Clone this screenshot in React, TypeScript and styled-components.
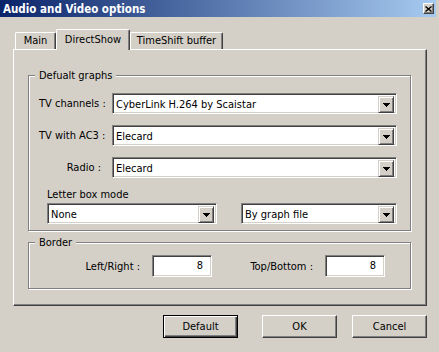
import React from "react";
import styled, { createGlobalStyle } from "styled-components";

const FONT = `"DejaVu Sans Condensed", "Liberation Sans", Tahoma, sans-serif`;

const Global = createGlobalStyle`
  html, body { margin: 0; padding: 0; background: #D4D0C8; }
  body { font-family: ${FONT}; font-size: 11px; color: #000; }
  * { box-sizing: border-box; }
`;

const Window = styled.div`
  width: 439px;
  height: 352px;
  background: #d4d0c8;
  display: flex;
  flex-direction: column;
  overflow: hidden;
`;

const TitleBar = styled.div`
  height: 17px;
  width: 436px;
  background: linear-gradient(to right, #0a246a, #a6caf0);
  display: flex;
  align-items: center;
  justify-content: space-between;
  padding: 0 2px 0 3px;
`;

const Title = styled.span`
  color: #fff;
  font-weight: bold;
  font-size: 11.5px;
  line-height: 14px;
`;

const CloseBtn = styled.div`
  width: 11px;
  height: 11px;
  background: #d4d0c8;
  border-top: 1px solid #fff;
  border-left: 1px solid #fff;
  border-right: 1px solid #404040;
  border-bottom: 1px solid #404040;
  box-shadow: inset -1px -1px #808080;
  display: flex;
  align-items: center;
  justify-content: center;
`;

const Body = styled.div`
  display: flex;
  flex-direction: column;
  padding: 0 12px 0 13px;
`;

const TabRow = styled.div`
  display: flex;
  align-items: flex-end;
  height: 20px;
  margin-top: 12px;
  padding-left: 2px;
`;

const Tab = styled.div<{ $w: number; $active?: boolean }>`
  width: ${(p) => p.$w}px;
  height: ${(p) => (p.$active ? 21 : 17)}px;
  margin-bottom: ${(p) => (p.$active ? -1 : 0)}px;
  position: relative;
  z-index: ${(p) => (p.$active ? 2 : 1)};
  background: #d4d0c8;
  border-top: 1px solid #fff;
  border-left: 1px solid #fff;
  border-right: 1px solid #404040;
  box-shadow: inset -1px 0 #808080;
  border-radius: 2px 2px 0 0;
  display: flex;
  justify-content: center;
  padding-top: ${(p) => (p.$active ? 3 : 1)}px;
  line-height: 13px;
`;

const Panel = styled.div`
  width: 414px;
  height: 257px;
  border-top: 1px solid #fff;
  border-left: 1px solid #fff;
  border-right: 1px solid #404040;
  border-bottom: 1px solid #404040;
  box-shadow: inset -1px -1px #808080;
  padding: 25px 15px 16px 14px;
  display: flex;
  flex-direction: column;
  gap: 11px;
`;

const Group = styled.div<{ $h: number }>`
  position: relative;
  height: ${(p) => p.$h}px;
  border: 1px solid #808080;
  box-shadow: inset 1px 1px #fff, 1px 1px #fff;
`;

const Legend = styled.span`
  position: absolute;
  top: -7px;
  left: 6px;
  padding: 0 4px;
  background: #d4d0c8;
  line-height: 13px;
`;

const GraphsBody = styled.div`
  padding: 17px 13px 6px 10px;
  display: flex;
  flex-direction: column;
`;

const Rows = styled.div`
  display: flex;
  flex-direction: column;
  gap: 11px;
`;

const Row = styled.div`
  display: flex;
  align-items: center;
`;

const Label = styled.span<{ $w: number }>`
  width: ${(p) => p.$w}px;
  text-align: right;
  white-space: nowrap;
  line-height: 13px;
`;

const Combo = styled.div<{ $w?: number }>`
  height: 21px;
  ${(p) => (p.$w ? `width: ${p.$w}px;` : "flex: 1;")}
  margin-left: ${(p) => (p.$w ? 0 : 11)}px;
  background: #fff;
  border: 1px solid;
  border-color: #808080 #fff #fff #808080;
  box-shadow: inset 1px 1px #404040, inset -1px -1px #d4d0c8;
  padding: 2px;
  display: flex;
  align-items: stretch;
`;

const ComboText = styled.span`
  flex: 1;
  padding-left: 1px;
  line-height: 17px;
  white-space: nowrap;
  overflow: hidden;
`;

const DropBtn = styled.div`
  width: 16px;
  height: 17px;
  background: #d4d0c8;
  border-top: 1px solid #d4d0c8;
  border-left: 1px solid #d4d0c8;
  border-right: 1px solid #404040;
  border-bottom: 1px solid #404040;
  box-shadow: inset 1px 1px #fff, inset -1px -1px #808080;
  display: flex;
  align-items: center;
  justify-content: center;
`;

const SubLabel = styled.div`
  margin-top: 10px;
  margin-left: 8px;
  line-height: 13px;
  margin-bottom: 2px;
`;

const LetterRow = styled.div`
  display: flex;
  justify-content: space-between;
  padding-left: 8px;
`;

const BorderRow = styled.div`
  display: flex;
  align-items: center;
  padding: 12px 0 0 41px;
`;

const Edit = styled.div`
  width: 60px;
  height: 22px;
  margin-left: 12px;
  background: #fff;
  border: 1px solid;
  border-color: #808080 #fff #fff #808080;
  box-shadow: inset 1px 1px #404040, inset -1px -1px #d4d0c8;
  text-align: right;
  padding-right: 8px;
  line-height: 19px;
`;

const ButtonRow = styled.div`
  display: flex;
  justify-content: flex-end;
  margin-top: 9px;
`;

const Button = styled.div<{ $default?: boolean; $ml: number }>`
  width: 75px;
  height: 23px;
  margin-left: ${(p) => p.$ml}px;
  display: flex;
  align-items: center;
  justify-content: center;
  background: #d4d0c8;
  ${(p) =>
    p.$default
      ? `border: 1px solid #000; box-shadow: inset 1px 1px #fff, inset -1px -1px #404040, inset -2px -2px #808080;`
      : `border-top: 1px solid #fff; border-left: 1px solid #fff; border-right: 1px solid #404040; border-bottom: 1px solid #404040; box-shadow: inset -1px -1px #808080;`}
`;

const Arrow = () => (
  <svg width="7" height="4" viewBox="0 0 7 4">
    <path d="M0 0H7L3.5 4Z" fill="#000" shapeRendering="crispEdges" />
  </svg>
);

const CloseGlyph = () => (
  <svg width="7" height="6" viewBox="0 0 7 6">
    <path d="M0.5 0.5L6.5 5.5M6.5 0.5L0.5 5.5" stroke="#000" strokeWidth="1.4" />
  </svg>
);

const ComboBox = ({ value, w }: { value: string; w?: number }) => (
  <Combo $w={w}>
    <ComboText>{value}</ComboText>
    <DropBtn>
      <Arrow />
    </DropBtn>
  </Combo>
);

export default function App() {
  return (
    <>
      <Global />
      <Window>
        <TitleBar>
          <Title>Audio and Video options</Title>
          <CloseBtn>
            <CloseGlyph />
          </CloseBtn>
        </TitleBar>
        <Body>
          <TabRow>
            <Tab $w={41}>Main</Tab>
            <Tab $w={74} $active>
              DirectShow
            </Tab>
            <Tab $w={93}>TimeShift buffer</Tab>
          </TabRow>
          <Panel>
            <Group $h={156}>
              <Legend>Defualt graphs</Legend>
              <GraphsBody>
                <Rows>
                  <Row>
                    <Label $w={62}>TV channels :</Label>
                    <ComboBox value="CyberLink H.264 by Scaistar" />
                  </Row>
                  <Row>
                    <Label $w={62}>TV with AC3 :</Label>
                    <ComboBox value="Elecard" />
                  </Row>
                  <Row>
                    <Label $w={62}>Radio :</Label>
                    <ComboBox value="Elecard" />
                  </Row>
                </Rows>
                <SubLabel>Letter box mode</SubLabel>
                <LetterRow>
                  <ComboBox value="None" w={170} />
                  <ComboBox value="By graph file" w={156} />
                </LetterRow>
              </GraphsBody>
            </Group>
            <Group $h={47}>
              <Legend>Border</Legend>
              <BorderRow>
                <Label $w={70}>Left/Right :</Label>
                <Edit>8</Edit>
                <Label $w={101}>Top/Bottom :</Label>
                <Edit>8</Edit>
              </BorderRow>
            </Group>
          </Panel>
          <ButtonRow>
            <Button $default $ml={0}>
              Default
            </Button>
            <Button $ml={24}>OK</Button>
            <Button $ml={15}>Cancel</Button>
          </ButtonRow>
        </Body>
      </Window>
    </>
  );
}
